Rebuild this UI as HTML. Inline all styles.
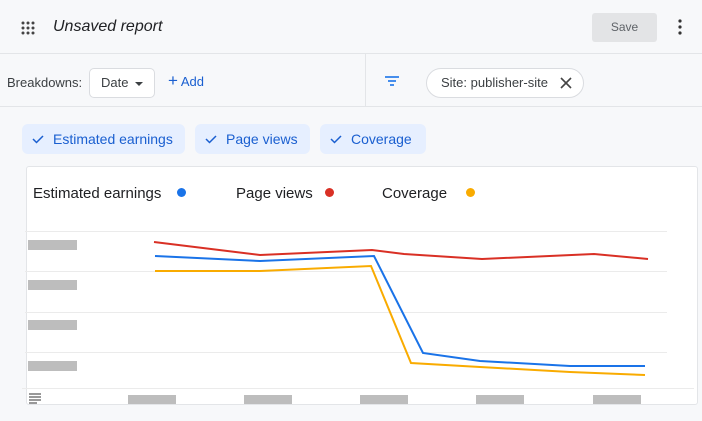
<!DOCTYPE html>
<html><head><style>
*{box-sizing:border-box;margin:0;padding:0}
body{width:702px;height:421px;background:#f7f8fa;font-family:"Liberation Sans",Arial,sans-serif;position:relative;overflow:hidden;color:#202124}
.abs{position:absolute}
.hl{position:absolute;left:0;width:702px;height:1px;background:#e3e5e8}
.chip{position:absolute;top:124px;height:30px;background:#e6efff;border-radius:6px;color:#1a5fd0;font-size:14px;line-height:30px;padding-left:31px;font-weight:500}
.chip svg{position:absolute;left:10px;top:9px}
.yl{position:absolute;left:28px;width:49px;height:10px;background:#bdbdbd}
.xl{position:absolute;top:395px;width:48px;height:9px;background:#bdbdbd}
</style></head><body>
<svg class="abs" style="left:20px;top:20px" width="16" height="16"><g fill="#444">
<circle cx="3" cy="3" r="1.5"/><circle cx="8" cy="3" r="1.5"/><circle cx="13" cy="3" r="1.5"/>
<circle cx="3" cy="8" r="1.5"/><circle cx="8" cy="8" r="1.5"/><circle cx="13" cy="8" r="1.5"/>
<circle cx="3" cy="13" r="1.5"/><circle cx="8" cy="13" r="1.5"/><circle cx="13" cy="13" r="1.5"/></g></svg>
<div class="abs" style="left:53px;top:18px;font-size:16px;font-style:italic;color:#202124">Unsaved report</div>
<div class="abs" style="left:592px;top:13px;width:65px;height:29px;background:#e3e4e6;border-radius:3px;font-size:12px;color:#5f6368;text-align:center;line-height:29px">Save</div>
<svg class="abs" style="left:676px;top:19px" width="8" height="16"><g fill="#333"><circle cx="4" cy="2" r="1.6"/><circle cx="4" cy="8" r="1.6"/><circle cx="4" cy="14" r="1.6"/></g></svg>
<div class="hl" style="top:53px"></div>
<div class="abs" style="left:365px;top:54px;width:1px;height:52px;background:#e3e5e8"></div>
<div class="abs" style="left:7px;top:75px;font-size:13px;color:#3c4043">Breakdowns:</div>
<div class="abs" style="left:89px;top:68px;width:66px;height:30px;background:#fff;border:1px solid #dadce0;border-radius:5px;font-size:13px;color:#3c4043;line-height:28px;padding-left:11px">Date <span style="display:inline-block;border-left:4px solid transparent;border-right:4px solid transparent;border-top:4px solid #3c4043;vertical-align:middle;margin-left:3px"></span></div>
<div class="abs" style="left:168px;top:74px;font-size:13px;color:#1a5fd0"><span style="font-size:17px;line-height:14px">+</span> Add</div>
<svg class="abs" style="left:384px;top:75px" width="16" height="12"><g stroke="#1a73e8" stroke-width="1.6"><line x1="1" y1="2" x2="15" y2="2"/><line x1="4" y1="6" x2="12" y2="6"/><line x1="6" y1="10" x2="10" y2="10"/></g></svg>
<div class="abs" style="left:426px;top:68px;width:158px;height:30px;background:#fff;border:1px solid #dadce0;border-radius:15px;font-size:13px;color:#3c4043;line-height:28px;padding-left:14px">Site: publisher-site</div>
<svg class="abs" style="left:560px;top:77px" width="12" height="12"><g stroke="#444" stroke-width="1.6"><line x1="1" y1="1" x2="11" y2="11"/><line x1="11" y1="1" x2="1" y2="11"/></g></svg>
<div class="hl" style="top:106px"></div>
<div class="chip" style="left:22px;width:163px"><svg width="12" height="12"><path d="M1 6l3.5 3.5L11 3" stroke="#1a5fd0" stroke-width="1.5" fill="none"/></svg>Estimated earnings</div>
<div class="chip" style="left:195px;width:115px"><svg width="12" height="12"><path d="M1 6l3.5 3.5L11 3" stroke="#1a5fd0" stroke-width="1.5" fill="none"/></svg>Page views</div>
<div class="chip" style="left:320px;width:106px"><svg width="12" height="12"><path d="M1 6l3.5 3.5L11 3" stroke="#1a5fd0" stroke-width="1.5" fill="none"/></svg>Coverage</div>
<div class="abs" style="left:26px;top:166px;width:672px;height:239px;background:#fff;border:1px solid #e3e5e8;border-radius:3px"></div>
<div class="abs" style="left:33px;top:185px;font-size:15px;color:#202124">Estimated earnings</div>
<div class="abs" style="left:177px;top:188px;width:9px;height:9px;border-radius:50%;background:#1a73e8"></div>
<div class="abs" style="left:236px;top:185px;font-size:15px;color:#202124">Page views</div>
<div class="abs" style="left:325px;top:188px;width:9px;height:9px;border-radius:50%;background:#d93025"></div>
<div class="abs" style="left:382px;top:185px;font-size:15px;color:#202124">Coverage</div>
<div class="abs" style="left:466px;top:188px;width:9px;height:9px;border-radius:50%;background:#f9ab00"></div>
<svg class="abs" style="left:0;top:0" width="702" height="421">
<g stroke="#ebebeb" stroke-width="1">
<line x1="25" y1="231.5" x2="667" y2="231.5"/><line x1="25" y1="271.5" x2="667" y2="271.5"/>
<line x1="25" y1="312.5" x2="667" y2="312.5"/><line x1="25" y1="352.5" x2="667" y2="352.5"/>
<line x1="22" y1="388.5" x2="694" y2="388.5"/></g>
<polyline fill="none" stroke="#d93025" stroke-width="2" points="154,242 260,255 372,250 404,254 482,259 594,254 648,259"/>
<polyline fill="none" stroke="#1a73e8" stroke-width="2" points="155,256 260,261 374,256 423,353 480,361 570,366 645,366"/>
<polyline fill="none" stroke="#f9ab00" stroke-width="2" points="155,271 260,271 371,266 411,363 480,367 570,372 645,375"/>
<g stroke="#555" stroke-width="1.2"><line x1="29" y1="394" x2="41" y2="394"/><line x1="29" y1="397" x2="41" y2="397"/><line x1="29" y1="400" x2="41" y2="400"/><line x1="29" y1="403" x2="37" y2="403"/></g>
</svg>
<div class="yl" style="top:240px"></div><div class="yl" style="top:280px"></div>
<div class="yl" style="top:320px"></div><div class="yl" style="top:361px"></div>
<div class="xl" style="left:128px"></div><div class="xl" style="left:244px"></div>
<div class="xl" style="left:360px"></div><div class="xl" style="left:476px"></div><div class="xl" style="left:593px"></div>
</body></html>
